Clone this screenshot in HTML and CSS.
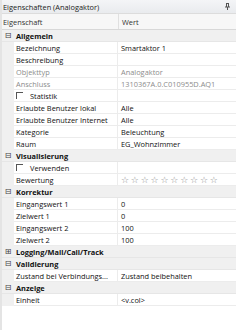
FILE: index.html
```html
<!DOCTYPE html>
<html>
<head>
<meta charset="utf-8">
<link rel="stylesheet" href="styles.css">
</head>
<body>
<div class="panel">
  <div class="title">
    <span>Eigenschaften (Analogaktor)</span>
    <svg class="pin" width="7" height="7" viewBox="0 0 7 7"><path d="M2 0.5h3M2.5 0.5v3.5M4.5 0.5v3.5M1 4h5M3.5 4v3" stroke="#555" stroke-width="1" fill="none"/></svg>
  </div>
  <div class="head">
    <div class="hname">Eigenschaft</div>
    <div class="hval">Wert</div>
  </div>
  <div class="grid">
    <div class="cat"><span class="tog">⊟</span><span>Allgemein</span></div>
    <div class="row"><div class="g"></div><div class="n">Bezeichnung</div><div class="v">Smartaktor 1</div></div>
    <div class="row"><div class="g"></div><div class="n">Beschreibung</div><div class="v"></div></div>
    <div class="row dis"><div class="g"></div><div class="n">Objekttyp</div><div class="v">Analogaktor</div></div>
    <div class="row dis"><div class="g"></div><div class="n">Anschluss</div><div class="v">1310367A.0.C010955D.AQ1</div></div>
    <div class="row"><div class="g"></div><div class="n"><span class="cb"></span>Statistik</div><div class="v"></div></div>
    <div class="row"><div class="g"></div><div class="n">Erlaubte Benutzer lokal</div><div class="v">Alle</div></div>
    <div class="row"><div class="g"></div><div class="n">Erlaubte Benutzer Internet</div><div class="v">Alle</div></div>
    <div class="row"><div class="g"></div><div class="n">Kategorie</div><div class="v">Beleuchtung</div></div>
    <div class="row"><div class="g"></div><div class="n">Raum</div><div class="v">EG_Wohnzimmer</div></div>
    <div class="cat"><span class="tog">⊟</span><span>Visualisierung</span></div>
    <div class="row"><div class="g"></div><div class="n"><span class="cb"></span>Verwenden</div><div class="v"></div></div>
    <div class="row"><div class="g"></div><div class="n">Bewertung</div><div class="v stars">☆☆☆☆☆☆☆☆☆☆</div></div>
    <div class="cat"><span class="tog">⊟</span><span>Korrektur</span></div>
    <div class="row"><div class="g"></div><div class="n">Eingangswert 1</div><div class="v">0</div></div>
    <div class="row"><div class="g"></div><div class="n">Zielwert 1</div><div class="v">0</div></div>
    <div class="row"><div class="g"></div><div class="n">Eingangswert 2</div><div class="v">100</div></div>
    <div class="row"><div class="g"></div><div class="n">Zielwert 2</div><div class="v">100</div></div>
    <div class="cat"><span class="tog">⊞</span><span>Logging/Mail/Call/Track</span></div>
    <div class="cat"><span class="tog">⊟</span><span>Validierung</span></div>
    <div class="row"><div class="g"></div><div class="n">Zustand bei Verbindungs...</div><div class="v">Zustand beibehalten</div></div>
    <div class="cat"><span class="tog">⊟</span><span>Anzeige</span></div>
    <div class="row"><div class="g"></div><div class="n">Einheit</div><div class="v">&lt;v.col&gt;</div></div>
  </div>
</div>
</body>
</html>
```
FILE: styles.css
```css
html, body { margin: 0; padding: 0; background: #fff; }
body { font-family: "Open Sans", "Liberation Sans", Arial, sans-serif; font-size: 7.4px; color: #111; }
.panel { width: 236px; height: 330px; overflow: hidden; background: #fff; border-left: 2px solid #e4e4e4; box-sizing: border-box; }
.title { height: 13px; display: flex; align-items: center; justify-content: space-between; padding: 0 5px 0 1px; background: linear-gradient(#f4f5f7, #e9ebee); border-bottom: 1px solid #dcdcdc; color: #222; }
.pin { display: block; }
.head { height: 15px; display: grid; grid-template-columns: 117px 1fr; align-items: center; background: #f7f7f7; border-bottom: 1px solid #d8d8d8; color: #333; }
.hname { padding-left: 1px; border-right: 1px solid #e0e0e0; height: 100%; display: flex; align-items: center; }
.hval { padding-left: 3px; }
.grid { display: flex; flex-direction: column; }
.cat { height: 12px; display: flex; align-items: center; background: #f0f0f0; border-bottom: 1px solid #e6e6e6; font-weight: bold; box-sizing: border-box; }
.tog { width: 12px; text-align: center; font-weight: normal; color: #444; font-size: 8px; margin-right: 2px; font-family: "DejaVu Sans", sans-serif; }
.row { height: 12px; display: grid; grid-template-columns: 12px 104px 1fr; box-sizing: border-box; }
.g { background: #f0f0f0; }
.n { display: flex; align-items: center; padding-left: 2px; border-bottom: 1px solid #ececec; border-right: 1px solid #ececec; white-space: nowrap; overflow: hidden; }
.v { display: flex; align-items: center; padding-left: 3px; border-bottom: 1px solid #ececec; white-space: nowrap; }
.dis .n, .dis .v { color: #8c8c8c; }
.cb { width: 7px; height: 7px; border-left: 1px solid #555; border-top: 1px solid #555; box-sizing: border-box; margin-right: 7px; }
.stars { color: #8a8a8a; letter-spacing: 1.8px; font-size: 9px; font-family: "DejaVu Sans", sans-serif; }
```
